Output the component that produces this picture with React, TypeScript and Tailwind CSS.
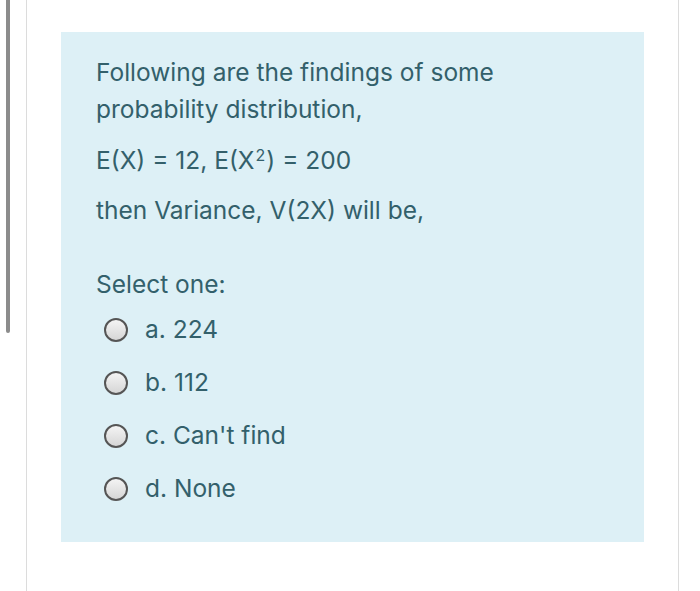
export default function App() {
  const options = ["a. 224", "b. 112", "c. Can't find", "d. None"];
  return (
    <div
      className="flex h-[591px] w-[700px] overflow-hidden bg-white text-[#33606b]"
      style={{ fontFamily: "Inter, Roboto, 'Noto Sans', sans-serif" }}
    >
      {/* scroll indicator */}
      <div className="w-[26px] shrink-0 pl-[6px]">
        <div className="h-[333px] w-[4px] rounded-b-sm bg-[#8c8c8c]" />
      </div>

      <div className="w-[653px] shrink-0 border-x border-[#dcdcdc] pl-[34px] pt-[32px]">
        <div className="h-[510px] w-[583px] bg-[#ddf0f6] pl-[35px] pt-[22px] text-[24.5px]">
          <p className="leading-[37px]">
            Following are the findings of some
            <br />
            probability distribution,
          </p>
          <p className="mt-[14px] leading-[37px]">
            E(X) = 12, E(X<sup className="px-[1px] text-[16px]">2</sup>) = 200
          </p>
          <p className="mt-[13px] leading-[37px]">then Variance, V(2X) will be,</p>

          <p className="mt-[37px] leading-[37px]">Select one:</p>
          <div className="flex flex-col">
            {options.map((o) => (
              <label key={o} className="flex h-[53px] items-center">
                <span className="ml-[8px] mr-[17px] h-[24px] w-[24px] rounded-full border-2 border-[#555] bg-gradient-to-b from-[#f4f4f4] to-[#d6d6d6]" />
                <span className="leading-[37px]">{o}</span>
              </label>
            ))}
          </div>
        </div>
      </div>
    </div>
  );
}
